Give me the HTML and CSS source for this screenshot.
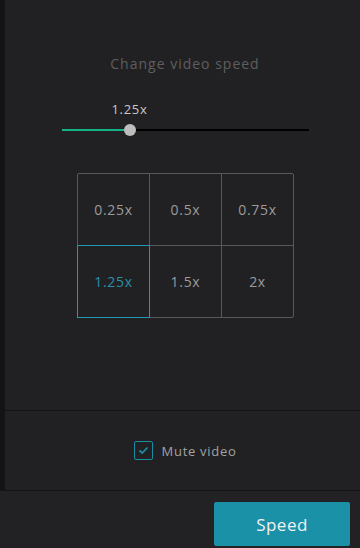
FILE: index.html
```html
<!DOCTYPE html>
<html lang="en">
<head>
  <meta charset="UTF-8">
  <meta name="viewport" content="width=device-width, initial-scale=1.0">
  <title>Video speed</title>
  <link rel="stylesheet" href="styles.css">
</head>
<body>
  <div class="layout">
    <div class="rail"></div>
    <div class="main">
      <!-- speed picker -->
      <section class="speed">
        <div class="title">Change video speed</div>
        <div class="slider">
          <div class="slider-value">1.25x</div>
          <div class="track">
            <div class="track-fill"></div>
            <div class="thumb"></div>
          </div>
        </div>
        <div class="grid">
          <div class="cell">0.25x</div>
          <div class="cell">0.5x</div>
          <div class="cell">0.75x</div>
          <div class="cell active">1.25x</div>
          <div class="cell">1.5x</div>
          <div class="cell">2x</div>
        </div>
      </section>

      <!-- mute option -->
      <section class="mute">
        <label class="check">
          <span class="box">
            <svg width="11" height="9" viewBox="0 0 11 9"><path d="M1.5 4.5 L4.2 7 L9.5 1.5" fill="none" stroke="#1b8ca3" stroke-width="1.8"/></svg>
          </span>
          Mute video
        </label>
      </section>
    </div>
  </div>

  <div class="footer">
    <button class="speed-btn">Speed</button>
  </div>
</body>
</html>
```

FILE: styles.css
```css
html, body {
  margin: 0;
  padding: 0;
  height: 100%;
  background-color: #212123;
  font-family: "Open Sans", sans-serif;
  letter-spacing: 0.7px;
}
.layout {
  display: flex;
  height: 491px;
  border-bottom: 1px solid #141415;
  box-sizing: border-box;
}
.rail {
  width: 5px;
  background-color: #141415;
}
.main {
  flex: 1;
  display: flex;
  flex-direction: column;
}

/* speed block */
.speed {
  height: 411px;
  border-bottom: 1px solid #141415;
  box-sizing: border-box;
  display: flex;
  flex-direction: column;
  align-items: center;
  padding-left: 5px;
  padding-top: 55px;
}
.title {
  color: #5e5e60;
  font-size: 14px;
  line-height: 18px;
  letter-spacing: 1px;
}
.slider {
  width: 247px;
  margin-top: 28px;
  position: relative;
}
.slider-value {
  color: #c8c8c8;
  font-size: 13px;
  line-height: 16px;
  width: 40px;
  text-align: center;
  margin-left: 48px;
}
.track {
  position: relative;
  height: 2px;
  background-color: #000;
  margin-top: 12px;
}
.track-fill {
  position: absolute;
  left: 0;
  top: 0;
  height: 2px;
  width: 68px;
  background-color: #14b287;
}
.thumb {
  position: absolute;
  left: 62px;
  top: -5px;
  width: 12px;
  height: 12px;
  border-radius: 50%;
  background-color: #bdbdbd;
}

/* cells overlap by 1px so that neighbours share one border line */
.grid {
  margin-top: 42px;
  margin-left: 1px;
  padding: 1px 0 0 1px;
  display: grid;
  grid-template-columns: repeat(3, 72px);
  grid-template-rows: repeat(2, 72px);
}
.cell {
  margin: -1px 0 0 -1px;
  border: 1px solid #59595b;
  color: #9b9b9d;
  font-size: 14px;
  letter-spacing: 0.7px;
  display: flex;
  align-items: center;
  justify-content: center;
  cursor: pointer;
}
.cell:first-child { border-top-left-radius: 2px; }
.cell:nth-child(3) { border-top-right-radius: 2px; }
.cell:nth-child(6) { border-bottom-right-radius: 2px; }
.cell.active {
  position: relative;
  z-index: 1;
  color: #2a8fab;
  border-color: #1e9ab5;
}

/* mute block */
.mute {
  flex: 1;
  display: flex;
  align-items: center;
  justify-content: center;
  padding-left: 5px;
}
.check {
  display: flex;
  align-items: center;
  gap: 9px;
  color: #a3a3a5;
  font-size: 13px;
  cursor: pointer;
}
.box {
  width: 17px;
  height: 17px;
  border: 1px solid #1b8ca3;
  border-radius: 2px;
  display: flex;
  align-items: center;
  justify-content: center;
}

/* footer */
.footer {
  height: 57px;
  display: flex;
  justify-content: flex-end;
  align-items: flex-end;
  padding: 0 10px 2px;
  box-sizing: border-box;
  background-color: #222224;
}
.speed-btn {
  width: 136px;
  height: 44px;
  border: 0;
  border-radius: 2px;
  background-color: #1b91a8;
  color: #f2f2f2;
  font-family: inherit;
  font-size: 17px;
  letter-spacing: 0.5px;
  cursor: pointer;
}
```
